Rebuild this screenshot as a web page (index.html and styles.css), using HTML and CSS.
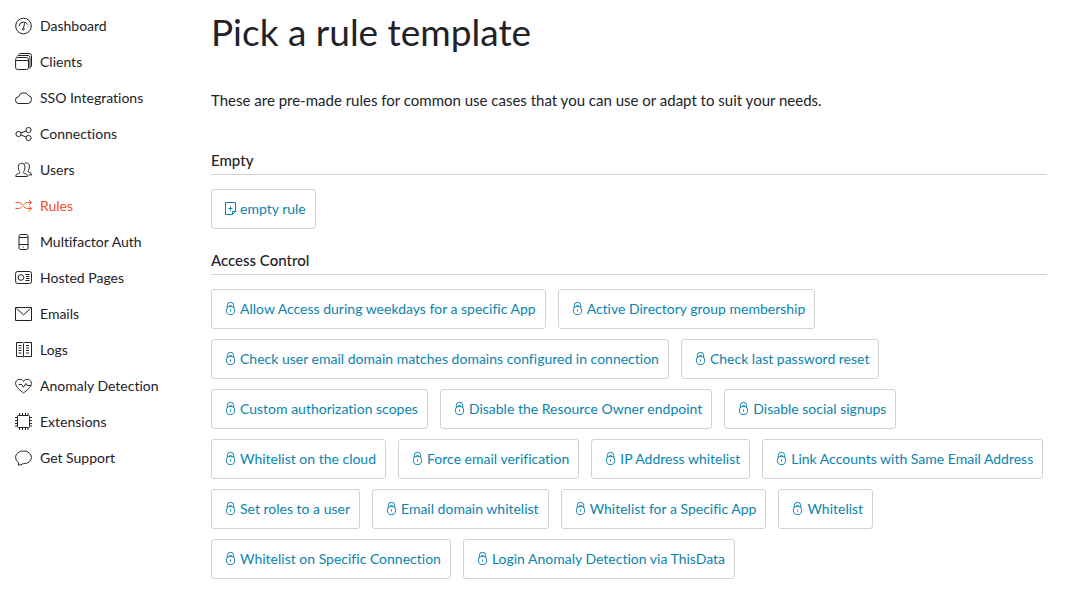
FILE: index.html
```html
<!DOCTYPE html>
<html lang="en">
<head>
<meta charset="utf-8">
<meta name="viewport" content="width=device-width, initial-scale=1">
<title>Pick a rule template</title>
<link rel="stylesheet" href="styles.css">
</head>
<body>
<svg class="sprite" aria-hidden="true">
  <symbol id="i-dashboard" viewBox="0 0 18 18"><circle cx="8.5" cy="9" r="7.8"/><path d="M4 9.2A4.7 4.7 0 0 1 12.9 7.7M13.2 9.2v.5M9.6 6.2 8.5 11"/><circle cx="8.3" cy="12" r="1"/></symbol>
  <symbol id="i-clients" viewBox="0 0 18 18"><rect x=".6" y="4.5" width="12.9" height="12" rx="2"/><path d="M.8 7.5h12.5M2 3.5Q2.4 2.5 4 2.5h9Q15 2.500 15 4.500v11M3.500 1.500Q4 .5 6 .5h8.500Q16.500.5 16.500 2.500V12q0 1.500-.9 2.200"/></symbol>
  <symbol id="i-cloud" viewBox="0 0 18 18"><path d="M4 14.500A3.400 3.400 0 0 1 3.700 7.700 5.200 5.200 0 0 1 13.300 6.400 4.100 4.100 0 0 1 12.800 14.500Z"/></symbol>
  <symbol id="i-connections" viewBox="0 0 18 18"><circle cx="3.500" cy="9" r="2.600"/><circle cx="13.500" cy="5" r="2.600"/><circle cx="13.500" cy="13" r="2.600"/><path d="m6 8 5-2M6 10l5 2"/></symbol>
  <symbol id="i-users" viewBox="0 0 18 18"><path d="M.8 15.500c0-2 .8-2.400 3-3 1.200-.4 1.200-1 .6-2C3.500 9 3.200 7.500 3.400 5.500 3.600 3.200 4.800 2.300 6.600 2.300s3 .9 3.200 3.200c.2 2-.1 3.500-1 5-.6 1-.6 1.600.6 2 2.200.6 3 1 3 3Z"/><path d="M9.500 2.700c.5-.5 1.200-.8 2-.8 1.800 0 2.700 1 2.900 3.100.1 1.800-.2 3.200-.9 4.500-.6 1-.5 1.500.5 1.900 1.800.5 2.500 1 2.500 2.600h-3"/></symbol>
  <symbol id="i-rules" viewBox="0 0 18 18"><path d="M.5 5.500h3c4 0 5 6 9 6h4M.5 11.500h3c1.500 0 2.500-.9 3.500-2M8.700 7.500c1-1.200 2.200-2 3.800-2h4M13.700 2.700l2.800 2.800-2.300 2.300M14.200 9.200l2.300 2.300-2.800 2.800"/></symbol>
  <symbol id="i-phone" viewBox="0 0 18 18"><rect x="4" y="1.500" width="9" height="15" rx="1.700"/><path d="M4 4.500h9M4 11.500h9M8 14h1"/></symbol>
  <symbol id="i-hosted" viewBox="0 0 18 18"><rect x=".6" y="2.500" width="15.900" height="12" rx="2"/><circle cx="6" cy="8.500" r="2.800"/><path d="M10.500 5.500h4M11 7.500h3.500M11 9.500h3.500M10.500 11.500h4M2.500 8.500h.8"/></symbol>
  <symbol id="i-mail" viewBox="0 0 18 18"><path d="M.5 2.500h16v13H.5ZM1.500 3.500l7 6.300 7-6.300"/></symbol>
  <symbol id="i-logs" viewBox="0 0 18 18"><path d="M8.500 3v12.500M1.500 1.500h6l1 .7 1-.7h7v14h-7l-1 .7-1-.7h-6ZM3.500 4.500H6.500M3.500 7H6.500M3.500 9.500H6.500M3.500 12H6.500M11 4.500h3M11 7h3M11 9.500h3M11 12h3"/></symbol>
  <symbol id="i-heart" viewBox="0 0 18 18"><path d="M8.500 16C5.500 13.500.6 10 .6 6.300.6 2 6.500.8 8.500 4.500 10.500.8 16.400 2 16.400 6.300 16.400 10 11.500 13.500 8.500 16ZM3.700 7.500h3l1.700 2.700L11 6.500l1.200 2h4"/></symbol>
  <symbol id="i-chip" viewBox="0 0 18 18"><rect x="2.500" y="2.500" width="12" height="12" rx=".8"/><path d="M4.500 0v2M7.500 0v2M10.500 0v2M13 0v2M4.500 15v2M7.500 15v2M10.500 15v2M13 15v2M0 4.500h2M0 7.500h2M0 10.500h2M0 13h2M15 4.500h2M15 7.500h2M15 10.500h2M15 13h2"/></symbol>
  <symbol id="i-chat" viewBox="0 0 18 18"><path d="M3.600 16.200V13.500C1.700 12.300.6 10.500.6 8.400.6 4.800 4 2 8.500 2s7.900 2.800 7.900 6.400-3.400 6.300-7.900 6.300H8C6.500 15.700 5 16.200 3.600 16.200Z"/></symbol>
  <symbol id="i-lock" viewBox="0 0 14 16"><circle cx="6.500" cy="9.500" r="4.100"/><path d="M3.300 7V4.500a3.200 3.200 0 0 1 6.400 0V7M4.800 5.400Q5 4.600 6.500 4.600t1.700.8M6.500 8.500v2"/></symbol>
  <symbol id="i-note" viewBox="0 0 14 16"><path d="M1.500 1.500h10v9l-3 3h-7ZM8.500 13.500v-3h3M6.500 5.500v4M4.500 7.500h4"/></symbol>
</svg>
<div class="layout">
  <nav class="sidebar" aria-label="Main">
    <a class="nav-link" href="#"><svg class="nav-icon"><use href="#i-dashboard"/></svg>Dashboard</a>
    <a class="nav-link" href="#"><svg class="nav-icon"><use href="#i-clients"/></svg>Clients</a>
    <a class="nav-link" href="#"><svg class="nav-icon"><use href="#i-cloud"/></svg>SSO Integrations</a>
    <a class="nav-link" href="#"><svg class="nav-icon"><use href="#i-connections"/></svg>Connections</a>
    <a class="nav-link" href="#"><svg class="nav-icon"><use href="#i-users"/></svg>Users</a>
    <a class="nav-link active" href="#" aria-current="page"><svg class="nav-icon"><use href="#i-rules"/></svg>Rules</a>
    <a class="nav-link" href="#"><svg class="nav-icon"><use href="#i-phone"/></svg>Multifactor Auth</a>
    <a class="nav-link" href="#"><svg class="nav-icon"><use href="#i-hosted"/></svg>Hosted Pages</a>
    <a class="nav-link" href="#"><svg class="nav-icon"><use href="#i-mail"/></svg>Emails</a>
    <a class="nav-link" href="#"><svg class="nav-icon"><use href="#i-logs"/></svg>Logs</a>
    <a class="nav-link" href="#"><svg class="nav-icon"><use href="#i-heart"/></svg>Anomaly Detection</a>
    <a class="nav-link" href="#"><svg class="nav-icon"><use href="#i-chip"/></svg>Extensions</a>
    <a class="nav-link" href="#"><svg class="nav-icon"><use href="#i-chat"/></svg>Get Support</a>
  </nav>
  <main class="content">
    <h1 class="title">Pick a rule template</h1>
    <p class="intro">These are pre-made rules for common use cases that you can use or adapt to suit your needs.</p>
    <section class="group">
      <h2 class="group-title">Empty</h2>
      <div class="rules">
        <button class="rule" type="button"><svg class="rule-icon"><use href="#i-note"/></svg>empty rule</button>
      </div>
    </section>
    <section class="group">
      <h2 class="group-title">Access Control</h2>
      <div class="rules">
        <button class="rule" type="button"><svg class="rule-icon"><use href="#i-lock"/></svg>Allow Access during weekdays for a specific App</button>
        <button class="rule" type="button"><svg class="rule-icon"><use href="#i-lock"/></svg>Active Directory group membership</button>
        <button class="rule" type="button"><svg class="rule-icon"><use href="#i-lock"/></svg>Check user email domain matches domains configured in connection</button>
        <button class="rule" type="button"><svg class="rule-icon"><use href="#i-lock"/></svg>Check last password reset</button>
        <button class="rule" type="button"><svg class="rule-icon"><use href="#i-lock"/></svg>Custom authorization scopes</button>
        <button class="rule" type="button"><svg class="rule-icon"><use href="#i-lock"/></svg>Disable the Resource Owner endpoint</button>
        <button class="rule" type="button"><svg class="rule-icon"><use href="#i-lock"/></svg>Disable social signups</button>
        <button class="rule" type="button"><svg class="rule-icon"><use href="#i-lock"/></svg>Whitelist on the cloud</button>
        <button class="rule" type="button"><svg class="rule-icon"><use href="#i-lock"/></svg>Force email verification</button>
        <button class="rule" type="button"><svg class="rule-icon"><use href="#i-lock"/></svg>IP Address whitelist</button>
        <button class="rule" type="button"><svg class="rule-icon"><use href="#i-lock"/></svg>Link Accounts with Same Email Address</button>
        <button class="rule" type="button"><svg class="rule-icon"><use href="#i-lock"/></svg>Set roles to a user</button>
        <button class="rule" type="button"><svg class="rule-icon"><use href="#i-lock"/></svg>Email domain whitelist</button>
        <button class="rule" type="button"><svg class="rule-icon"><use href="#i-lock"/></svg>Whitelist for a Specific App</button>
        <button class="rule" type="button"><svg class="rule-icon"><use href="#i-lock"/></svg>Whitelist</button>
        <button class="rule" type="button"><svg class="rule-icon"><use href="#i-lock"/></svg>Whitelist on Specific Connection</button>
        <button class="rule" type="button"><svg class="rule-icon"><use href="#i-lock"/></svg>Login Anomaly Detection via ThisData</button>
      </div>
    </section>
  </main>
</div>
</body>
</html>
```
FILE: styles.css
```css
* {
  box-sizing: border-box;
}

body {
  margin: 0;
  background: #fff;
  color: #222228;
  font-family: Lato, "Open Sans", sans-serif;
  font-size: 14px;
  font-variant-ligatures: none;
}

.sprite {
  display: none;
}

.layout {
  display: flex;
  padding: 7px 27px 0 15px;
}

.sidebar {
  display: flex;
  flex-direction: column;
  flex: 0 0 196px;
}

.nav-link {
  display: flex;
  align-items: center;
  gap: 7px;
  height: 36px;
  color: inherit;
  text-decoration: none;
}

.nav-link.active {
  color: #eb5424;
}

.nav-icon,
.rule-icon {
  flex: none;
  fill: none;
  stroke: currentColor;
  stroke-width: 1;
}

.nav-icon {
  width: 18px;
  height: 18px;
  margin-top: 2px;
}

.content {
  flex: 1;
  min-width: 0;
}

.title {
  margin: 0 0 33px;
  font-size: 37px;
  font-weight: 400;
  line-height: 50px;
}

.intro {
  margin: 0 0 40px;
  font-size: 15px;
  line-height: 20px;
}

.group {
  margin-bottom: 21px;
}

.group-title {
  margin: 0 0 14px;
  padding-bottom: 4px;
  border-bottom: 1px solid #d0d2d3;
  font-size: 15px;
  font-weight: 500;
  line-height: 20px;
}

.rules {
  display: flex;
  flex-wrap: wrap;
  gap: 10px 12px;
}

.rule {
  display: flex;
  align-items: center;
  gap: 2px;
  height: 40px;
  padding: 0 9px 2px 12px;
  border: 1px solid #d0d2d3;
  border-radius: 3px;
  background: #fff;
  color: #0a84ae;
  font: inherit;
  white-space: nowrap;
  cursor: pointer;
}

.rule-icon {
  width: 14px;
  height: 16px;
  margin-top: 2px;
}
```
